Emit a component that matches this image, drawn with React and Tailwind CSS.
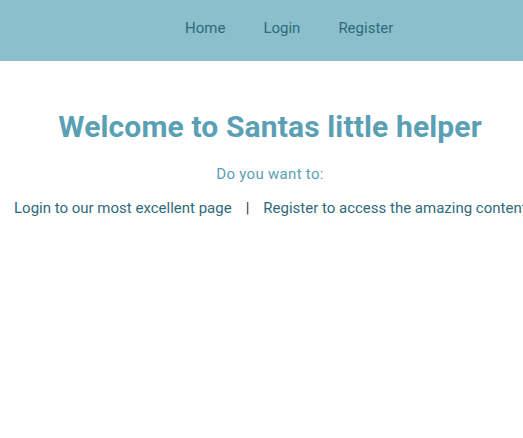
export default function App() {
  return (
    <div className="min-h-screen bg-white font-['Roboto',sans-serif] overflow-hidden">
      {/* Barra superior */}
      <header className="h-[61px] bg-[#8bbfcc] flex items-center pl-[166px] pb-[5px]">
        <nav className="flex items-center text-[15px] text-[#2f6a7a]">
          <a href="#" className="px-[19px]">Home</a>
          <a href="#" className="px-[19px]">Login</a>
          <a href="#" className="px-[19px]">Register</a>
        </nav>
      </header>

      <main className="flex flex-col items-center pt-[46px] pl-[17px]">
        <h1 className="text-[30px] font-bold text-[#5aa0b5] leading-[40px] tracking-[0.13px]">
          Welcome to Santas little helper
        </h1>
        <p className="mt-[16px] text-[15px] text-[#5aa0b5] tracking-[0.3px]">
          Do you want to:
        </p>
      </main>

      <div className="flex items-center whitespace-nowrap pl-[14px] mt-[11px] text-[15px] text-[#2f6a7a]">
        <a href="#">Login to our most excellent page</a>
        <span className="px-[14px] text-[#333]">|</span>
        <a href="#">Register to access the amazing content</a>
      </div>
    </div>
  );
}
